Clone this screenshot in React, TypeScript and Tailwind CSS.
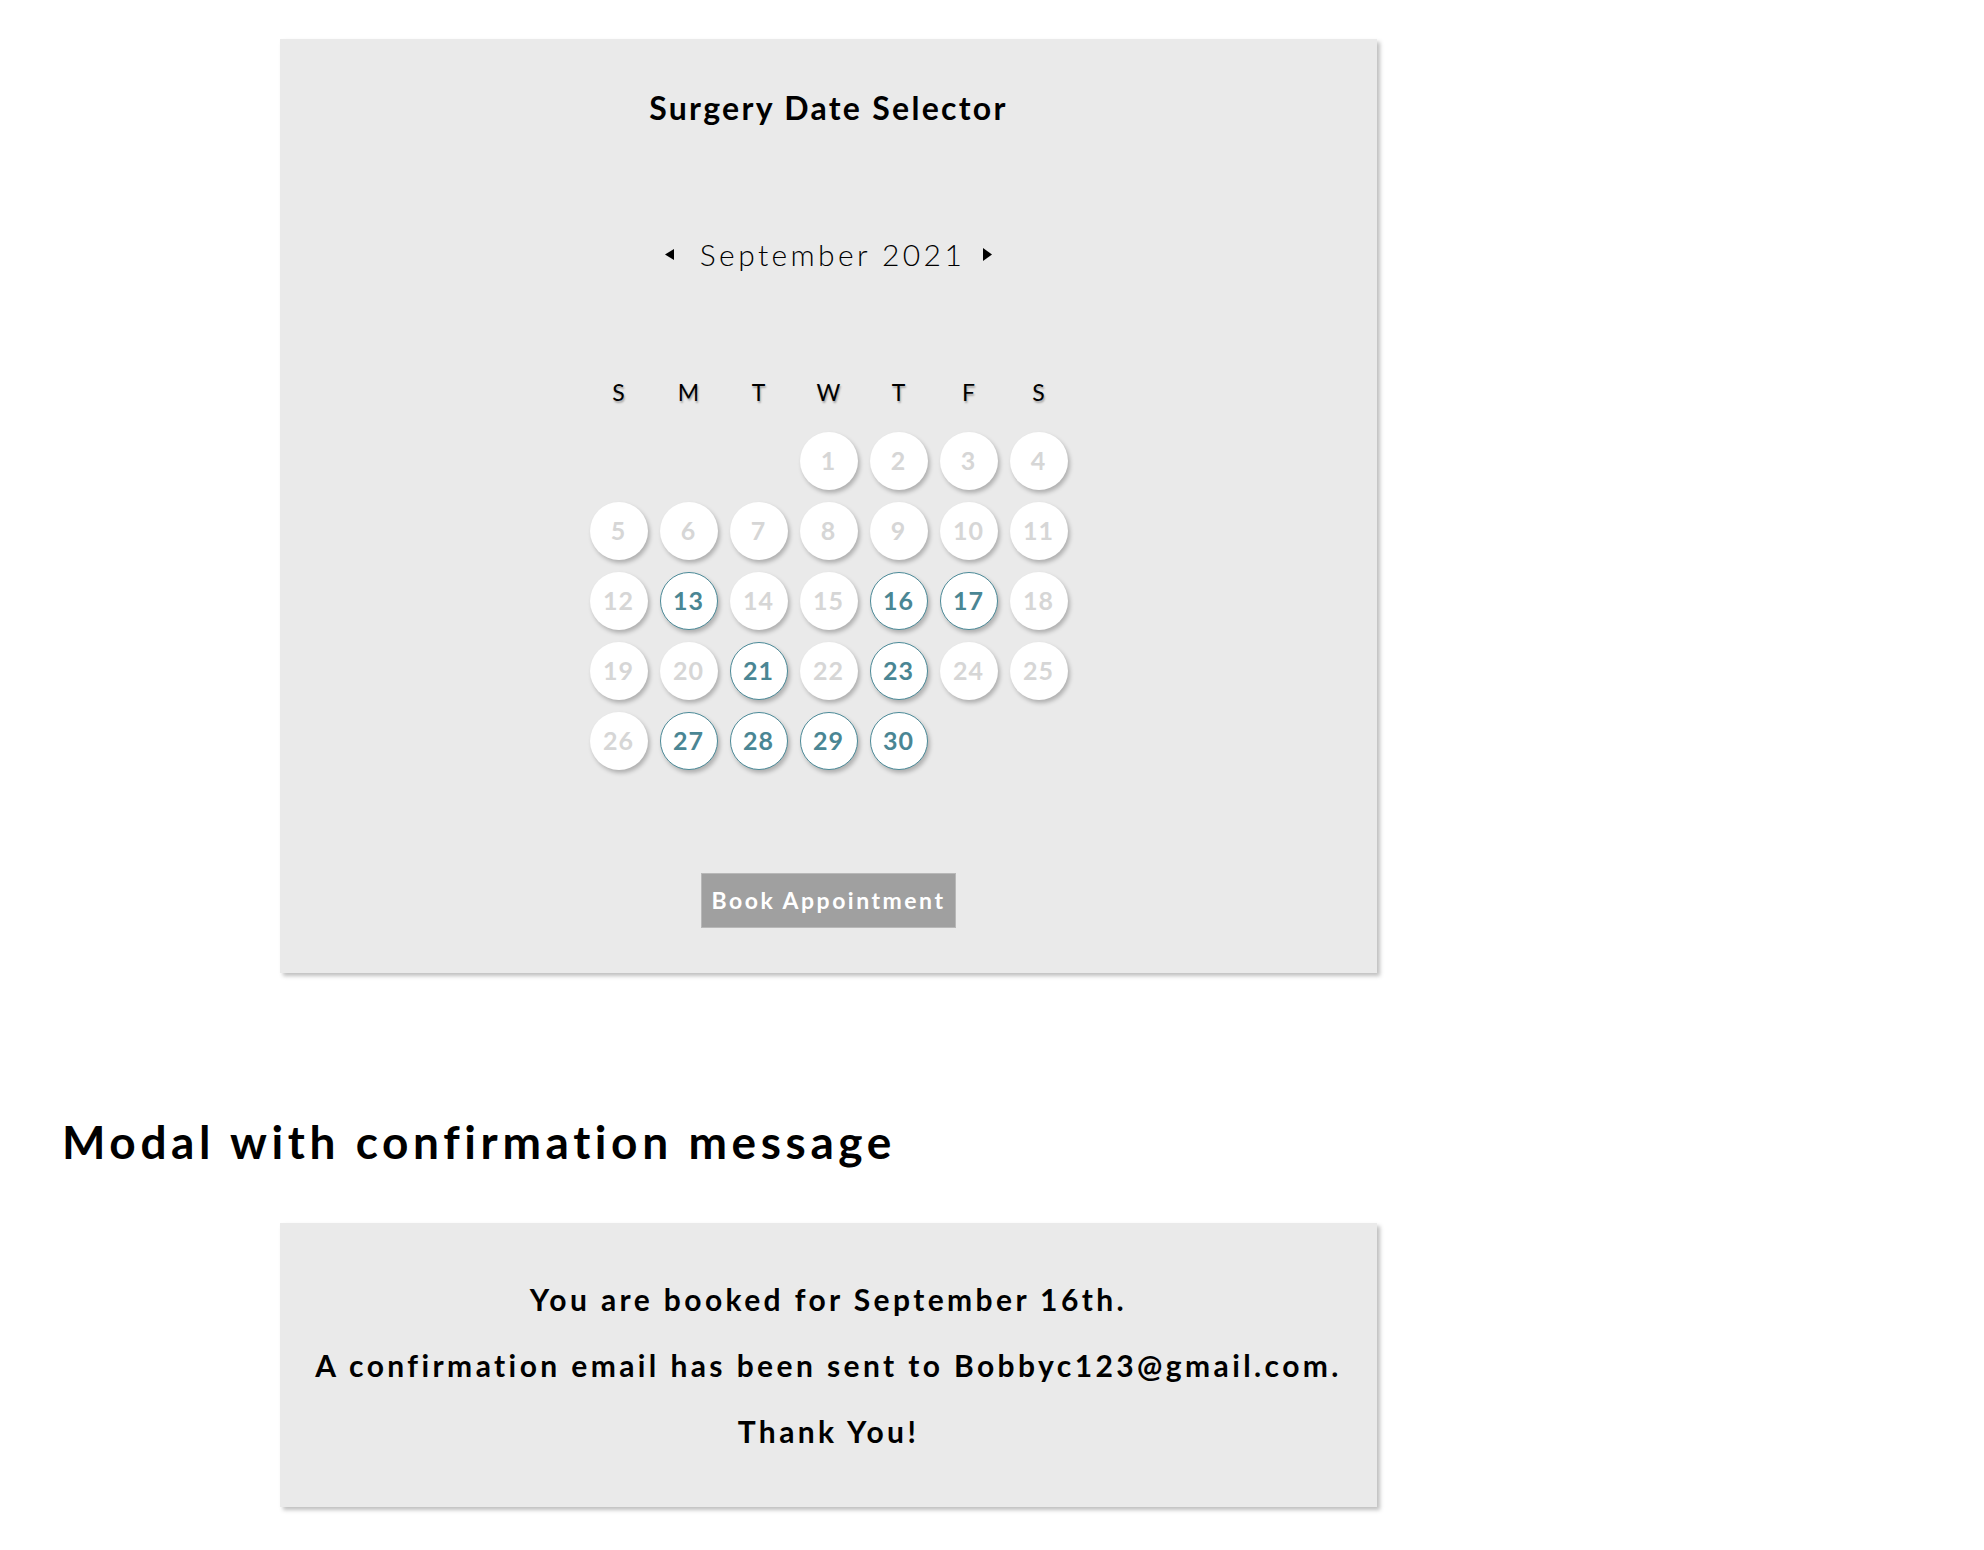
import React from 'react';

const weekdays = ['S', 'M', 'T', 'W', 'T', 'F', 'S'];
const available = [13, 16, 17, 21, 23, 27, 28, 29, 30];

function DayCircle({ day }: { day: number }) {
  const open = available.includes(day);
  return (
    <div
      className={
        open
          ? 'w-[58px] h-[58px] rounded-full bg-white border-[1.5px] border-[#4b8a98] shadow-[2px_3px_4px_rgba(0,0,0,0.25)] flex items-center justify-center text-[25px] font-bold text-[#4a8694] tracking-[1px]'
          : 'w-[58px] h-[58px] rounded-full bg-white shadow-[2px_3px_4px_rgba(0,0,0,0.25)] flex items-center justify-center text-[25px] font-bold text-[#d6d6d6] tracking-[1px]'
      }
    >
      {day}
    </div>
  );
}

export default function App() {
  // September 2021 starts on a Wednesday
  const cells: (number | null)[] = [null, null, null];
  for (let d = 1; d <= 30; d++) cells.push(d);

  return (
    <div className="min-h-[1550px] w-full bg-white font-['Lato','Liberation_Sans',sans-serif] text-black">
      {/* Date selector card */}
      <div className="ml-[280px] pt-[39px]">
        <div className="w-[1097px] h-[934px] bg-[#eaeaea] shadow-[3px_3px_4px_rgba(0,0,0,0.25)] flex flex-col items-center pt-[53px]">
          <h1 className="text-[32px] leading-none font-bold tracking-[2.3px]">Surgery Date Selector</h1>

          <div className="mt-[115px] flex items-center">
            <svg width="9" height="11" viewBox="0 0 9 11" className="mr-[26px]">
              <polygon points="9,0 0,5.5 9,11" fill="#000" />
            </svg>
            <span className="text-[30px] leading-none font-light tracking-[3.4px]">September 2021</span>
            <svg width="9" height="13" viewBox="0 0 9 13" className="ml-[18px]">
              <polygon points="0,0 9,6.5 0,13" fill="#000" />
            </svg>
          </div>

          <div className="mt-[112px] grid grid-cols-[repeat(7,58px)] gap-x-[12px]">
            {weekdays.map((w, i) => (
              <div
                key={i}
                className="text-center text-[23px] leading-none [text-shadow:1px_2px_2px_rgba(0,0,0,0.3)]"
              >
                {w}
              </div>
            ))}
          </div>

          <div className="mt-[28px] grid grid-cols-[repeat(7,58px)] gap-[12px]">
            {cells.map((d, i) =>
              d === null ? <div key={i} className="w-[58px] h-[58px]" /> : <DayCircle key={i} day={d} />
            )}
          </div>

          <button className="mt-[103px] w-[255px] h-[55px] bg-[#a0a0a0] border border-[#b8b8b8] text-white text-[23px] font-bold tracking-[2.5px]">
            Book Appointment
          </button>
        </div>
      </div>

      {/* Section heading */}
      <h2 className="ml-[62px] mt-[146px] text-[46px] leading-none font-bold tracking-[4.6px]">
        Modal with confirmation message
      </h2>

      {/* Confirmation card */}
      <div className="ml-[280px] mt-[58px] w-[1097px] h-[284px] bg-[#eaeaea] shadow-[3px_3px_4px_rgba(0,0,0,0.25)] flex flex-col items-center pt-[61px] gap-[36px] text-[30px] leading-none font-bold tracking-[3.4px]">
        <p>You are booked for September 16th.</p>
        <p>A confirmation email has been sent to Bobbyc123@gmail.com.</p>
        <p>Thank You!</p>
      </div>
    </div>
  );
}
